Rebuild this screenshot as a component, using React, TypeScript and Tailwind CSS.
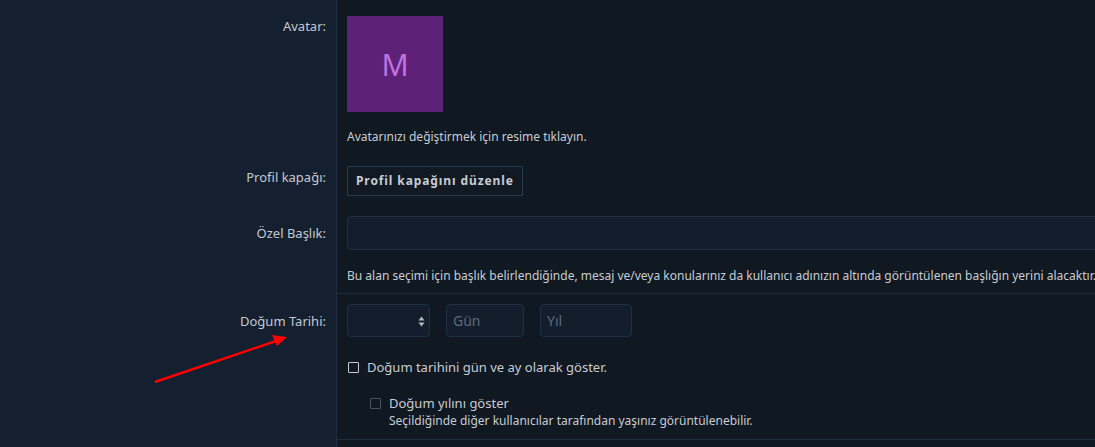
import React from "react";

const font = { fontFamily: '"Noto Sans", "Open Sans", sans-serif' };

function Row({
  label,
  labelPt,
  children,
  border,
  grow,
}: {
  label: string;
  labelPt: string;
  children?: React.ReactNode;
  border?: boolean;
  grow?: boolean;
}) {
  return (
    <div className={`flex ${grow ? "flex-1" : ""}`}>
      <div className={`w-[336px] shrink-0 bg-[#141f2f] pr-[10px] text-right text-[13px] leading-[18px] text-[#c5c9cf] ${labelPt}`}>
        {label}
      </div>
      <div className={`flex-1 min-w-0 border-l border-[#1d2c41] pl-[10px] ${border ? "border-b" : ""}`}>
        {children}
      </div>
    </div>
  );
}

export default function App() {
  return (
    <div className="relative flex flex-col w-[1095px] h-[447px] overflow-hidden bg-[#101822] text-[#c8ccd2]" style={font}>
      <Row label="Avatar:" labelPt="pt-[17px]">
        <div className="pt-[16px]">
          <div className="w-[96px] h-[96px] bg-[#5e2178] flex items-center justify-center text-[30px] text-[#bd72e0]">
            M
          </div>
          <div className="mt-[16px] text-[12px] leading-[18px]">Avatarınızı değiştirmek için resime tıklayın.</div>
        </div>
      </Row>
      <Row label="Profil kapağı:" labelPt="pt-[22px]">
        <div className="pt-[20px]">
          <button className="h-[30px] px-[8px] border border-[#283a51] bg-[#111923] text-[12px] font-bold tracking-[0.9px] text-[#c9ccd1]">
            Profil kapağını düzenle
          </button>
        </div>
      </Row>
      <Row label="Özel Başlık:" labelPt="pt-[28px]" border>
        <div className="pt-[20px] pb-[8px]">
          <div className="h-[34px] -mr-[10px] rounded-[4px] border border-[#1e2f47] bg-[#131d2c]"></div>
          <div className="mt-[17px] text-[12px] leading-[18px] whitespace-nowrap overflow-hidden">
            Bu alan seçimi için başlık belirlendiğinde, mesaj ve/veya konularınız da kullanıcı adınızın altında görüntülenen başlığın yerini alacaktır.
          </div>
        </div>
      </Row>
      <Row label="Doğum Tarihi:" labelPt="pt-[18px]" border>
        <div className="pt-[10px] pb-[9px]">
          <div className="flex gap-[16px]">
            <div className="relative w-[83px] h-[33px] rounded-[4px] border border-[#1e2f47] bg-[#131d2c]">
              <svg className="absolute right-[4px] top-[11px]" width="7" height="11" viewBox="0 0 7 11">
                <path d="M3.5 0.5 L6.5 4.5 L0.5 4.5 Z" fill="#b4bac4" />
                <path d="M3.5 10.5 L6.5 6.5 L0.5 6.5 Z" fill="#b4bac4" />
              </svg>
            </div>
            <div className="w-[78px] h-[33px] rounded-[4px] border border-[#1e2f47] bg-[#131d2c] flex items-center pl-[6px] text-[14px] text-[#5f6979]">
              Gün
            </div>
            <div className="w-[92px] h-[33px] rounded-[4px] border border-[#1e2f47] bg-[#131d2c] flex items-center pl-[6px] text-[14px] text-[#5f6979]">
              Yıl
            </div>
          </div>
          <div className="mt-[21px] flex items-center gap-[8px] text-[13px] leading-[18px] pl-[1px]">
            <span className="w-[11px] h-[11px] border-[1.5px] border-[#c8ccd2] rounded-[1px]"></span>
            <span>Doğum tarihini gün ve ay olarak göster.</span>
          </div>
          <div className="mt-[18px] pl-[23px] flex gap-[8px]">
            <span className="mt-[4px] w-[11px] h-[11px] border-[1.5px] border-[#4a5260] rounded-[1px]"></span>
            <div>
              <div className="text-[13px] leading-[18px]">Doğum yılını göster</div>
              <div className="text-[12px] leading-[18px]">Seçildiğinde diğer kullanıcılar tarafından yaşınız görüntülenebilir.</div>
            </div>
          </div>
        </div>
      </Row>
      <Row label="" labelPt="" grow />
      <svg className="absolute left-0 top-0 pointer-events-none" width="1095" height="447">
        <line x1="155" y1="382" x2="276" y2="341" stroke="#ff0000" strokeWidth="2.5" />
        <path d="M287 337 L272 335 L277 346 Z" fill="#ff0000" />
      </svg>
    </div>
  );
}
